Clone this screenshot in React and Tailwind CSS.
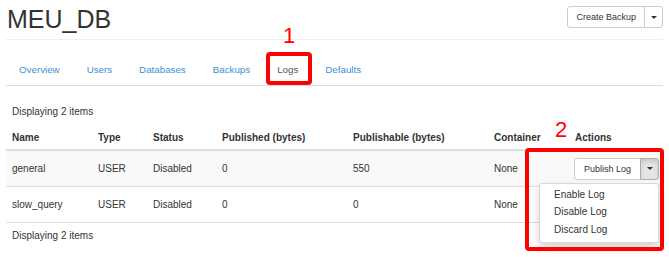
import { useState } from 'react';

const cols = 'grid grid-cols-[86px_55px_69px_131px_141px_81px_94px]';

const tabs = ['Overview', 'Users', 'Databases', 'Backups', 'Logs', 'Defaults'];

const logs = [
  { name: 'general', type: 'USER', status: 'Disabled', published: '0', publishable: '550', container: 'None' },
  { name: 'slow_query', type: 'USER', status: 'Disabled', published: '0', publishable: '0', container: 'None' },
];

const Caret = () => (
  <span className="inline-block w-0 h-0 border-l-[3px] border-r-[3px] border-t-[3px] border-l-transparent border-r-transparent border-t-[#333]" />
);

const SplitButton = ({ label, active, wide, children }) => (
  <div className="relative inline-flex">
    <button
      className={
        wide
          ? 'h-[22px] px-[9px] whitespace-nowrap text-[9px] text-[#333] bg-white border border-[#ccc] rounded-l-[3px]'
          : 'h-[22px] px-[8px] whitespace-nowrap text-[9px] text-[#333] bg-white border border-[#ccc] rounded-l-[3px]'
      }
    >
      {label}
    </button>
    <button
      className={
        active
          ? 'h-[22px] w-[19px] -ml-px flex items-center justify-center bg-[#e6e6e6] border border-[#adadad] rounded-r-[3px] shadow-[inset_0_3px_5px_rgba(0,0,0,0.125)]'
          : 'h-[22px] w-[19px] -ml-px flex items-center justify-center bg-white border border-[#ccc] rounded-r-[3px]'
      }
    >
      <Caret />
    </button>
    {children}
  </div>
);

const App = () => {
  const [tab, setTab] = useState('Logs');

  return (
    <div className="w-[669px] h-[257px] overflow-hidden bg-white px-[6px] text-[10px] leading-[14px] text-[#333] font-['Liberation_Sans',Arial,sans-serif]">
      <div className="flex justify-between items-start pt-[5px] pb-[6px] border-b border-[#eee]">
        <h1 className="text-[25px] leading-[28px] font-normal pl-px">MEU_DB</h1>
        <div className="mt-px">
          <SplitButton label="Create Backup" />
        </div>
      </div>

      <nav className="mt-[12px] flex border-b border-[#ddd] pl-px text-[9.75px]">
        {tabs.map((t) => (
          <div key={t} className="relative mr-[3px]">
            <button
              onClick={() => setTab(t)}
              className={
                t === tab
                  ? 'block h-[33px] px-[12px] pt-[11px] pb-[8px] text-[#555]'
                  : 'block h-[33px] px-[12px] pt-[11px] pb-[8px] text-[#3f8fd2]'
              }
            >
              {t}
            </button>
            {t === 'Logs' && (
              <>
                <span className="absolute left-[1px] w-[46px] top-[-27px] text-center text-[22px] leading-[22px] text-[#f00]">1</span>
                <span className="absolute left-[1px] top-0 w-[46px] h-[33px] border-4 border-[#f00] rounded-[4px] pointer-events-none" />
              </>
            )}
          </div>
        ))}
      </nav>

      <p className="mt-[19px] pl-[6px]">Displaying 2 items</p>

      <div className="relative mt-[4px]">
        <div className={`${cols} pt-[8px] pb-[4px] border-b-2 border-[#ddd] font-bold`}>
          <div className="px-[6px]">Name</div>
          <div className="px-[6px]">Type</div>
          <div className="px-[6px]">Status</div>
          <div className="px-[6px]">Published (bytes)</div>
          <div className="px-[6px]">Publishable (bytes)</div>
          <div className="px-[6px]">Container</div>
          <div className="relative px-[6px]">
            Actions
            <span className="absolute left-[-14px] top-[-12px] text-[22px] leading-[22px] font-normal text-[#f00]">2</span>
          </div>
        </div>

        {logs.map((l, i) => (
          <div
            key={l.name}
            className={
              i === 0
                ? `${cols} h-[36px] items-center border-b border-[#ddd] bg-[#f9f9f9]`
                : `${cols} h-[36px] items-center border-b border-[#ddd]`
            }
          >
            <div className="px-[6px]">{l.name}</div>
            <div className="px-[6px]">{l.type}</div>
            <div className="px-[6px]">{l.status}</div>
            <div className="px-[6px]">{l.published}</div>
            <div className="px-[6px]">{l.publishable}</div>
            <div className="px-[6px]">{l.container}</div>
            <div className="pl-[5px] flex">
              <SplitButton label="Publish Log" active={i === 0} wide>
                {i === 0 && (
                  <ul className="absolute right-0 top-full mt-[3px] z-10 w-[120px] pt-[2px] pb-[4px] bg-white border border-[rgba(0,0,0,0.15)] rounded-[3px] shadow-[0_5px_10px_rgba(0,0,0,0.175)]">
                    {['Enable Log', 'Disable Log', 'Discard Log'].map((a) => (
                      <li key={a} className="pl-[14px] leading-[17.5px] text-[#333]">{a}</li>
                    ))}
                  </ul>
                )}
              </SplitButton>
            </div>
          </div>
        ))}

        <span className="absolute left-[519px] top-[25px] w-[139px] h-[103px] border-4 border-[#f00] rounded-[4px] z-20 pointer-events-none" />
      </div>

      <p className="mt-[6px] pl-[6px]">Displaying 2 items</p>
    </div>
  );
};

export default App;
